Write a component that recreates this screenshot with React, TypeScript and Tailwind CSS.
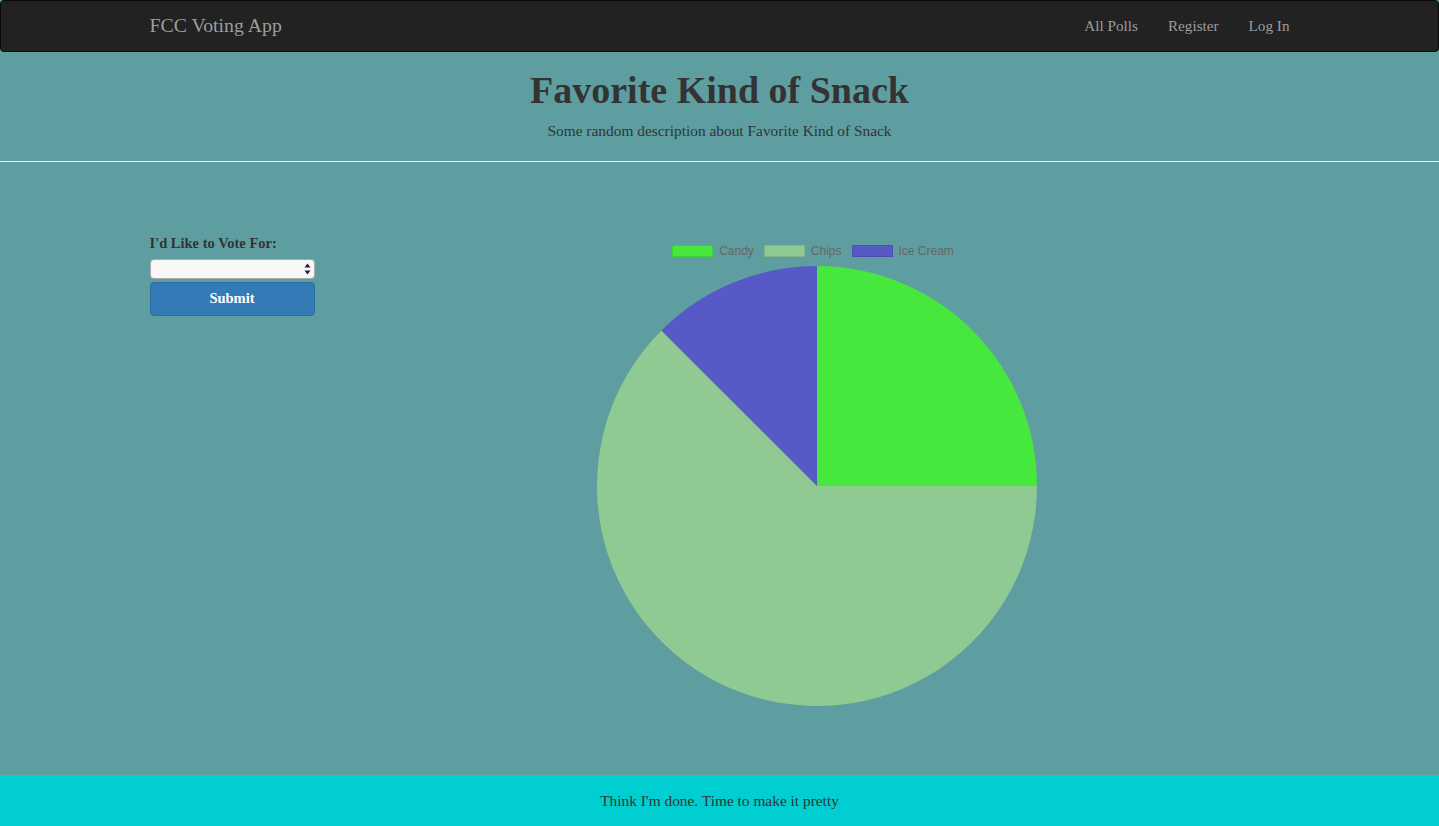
import React from "react";

const CX = 220;
const CY = 220;
const R = 220;

function pt(angleDeg: number) {
  const a = ((angleDeg - 90) * Math.PI) / 180;
  return [CX + R * Math.cos(a), CY + R * Math.sin(a)];
}

function slice(start: number, end: number) {
  const [x1, y1] = pt(start);
  const [x2, y2] = pt(end);
  const large = end - start > 180 ? 1 : 0;
  return `M ${CX} ${CY} L ${x1} ${y1} A ${R} ${R} 0 ${large} 1 ${x2} ${y2} Z`;
}

const data = [
  { label: "Candy", value: 2, color: "#46e83d" },
  { label: "Chips", value: 5, color: "#8fca93" },
  { label: "Ice Cream", value: 1, color: "#5659c6" },
];

export default function App() {
  const total = data.reduce((s, d) => s + d.value, 0);
  let acc = 0;
  const slices = data.map((d) => {
    const start = (acc / total) * 360;
    acc += d.value;
    const end = (acc / total) * 360;
    return { ...d, path: slice(start, end) };
  });

  return (
    <div
      className="min-h-screen flex flex-col bg-[#5f9ea0] text-[#333]"
      style={{ fontFamily: '"Liberation Serif", serif' }}
    >
      <nav className="h-[52px] bg-[#222] border border-[#080808] rounded-[4px] flex items-center">
        <div className="w-[1170px] mx-auto px-[15px] flex items-center justify-between">
          <span className="text-[19.8px] text-[#9d9d9d]">FCC Voting App</span>
          <div className="flex text-[15.2px] text-[#9d9d9d] -mr-[15px]">
            <span className="px-[15px]">All Polls</span>
            <span className="px-[15px]">Register</span>
            <span className="px-[15px]">Log In</span>
          </div>
        </div>
      </nav>

      <header className="pt-[18px] text-center">
        <h1 className="text-[38px] leading-[40px] font-bold">Favorite Kind of Snack</h1>
        <p className="mt-[10px] text-[15.4px] leading-[22px]">
          Some random description about Favorite Kind of Snack
        </p>
      </header>
      <hr className="mt-[19px] border-0 border-t border-[#eee]" />

      <main className="flex-1">
        <div className="w-[1170px] mx-auto flex pt-[71px]">
          <div className="w-[195px] px-[15px]">
            <label className="block text-[14.5px] leading-[20px] font-bold">I'd Like to Vote For:</label>
            <div className="mt-[6px] h-[20px] w-[165px] rounded-[4px] bg-[#f8f8f8] border border-[#aaa] relative">
              <svg className="absolute right-[3px] top-[3px]" width="7" height="12" viewBox="0 0 7 12">
                <path d="M3.5 0.5 L6.5 4.5 L0.5 4.5 Z" fill="#222" />
                <path d="M3.5 11.5 L6.5 7.5 L0.5 7.5 Z" fill="#222" />
              </svg>
            </div>
            <button className="mt-[3px] w-[165px] h-[34px] rounded-[4px] bg-[#337ab7] border border-[#2e6da4] text-white text-[14.5px] font-bold">
              Submit
            </button>
          </div>
          <div className="w-[975px] px-[15px] flex flex-col items-center pt-[12px]">
            <div
              className="flex items-center gap-[10px] text-[12px] leading-[12px] text-[#666] h-[12px] -translate-x-[4px]"
              style={{ fontFamily: '"Liberation Sans", Arial, sans-serif' }}
            >
              {data.map((d) => (
                <div key={d.label} className="flex items-center gap-[6px]">
                  <span
                    className="inline-block w-[41px] h-[12px] border border-black/10"
                    style={{ backgroundColor: d.color }}
                  />
                  <span>{d.label}</span>
                </div>
              ))}
            </div>
            <svg className="mt-[9px]" width="440" height="440" viewBox="0 0 440 440">
              {slices.map((s) => (
                <path key={s.label} d={s.path} fill={s.color} />
              ))}
            </svg>
          </div>
        </div>
      </main>

      <footer className="h-[51px] bg-[#00ced1] flex items-center justify-center text-[15.4px]">
        Think I'm done. Time to make it pretty
      </footer>
    </div>
  );
}
